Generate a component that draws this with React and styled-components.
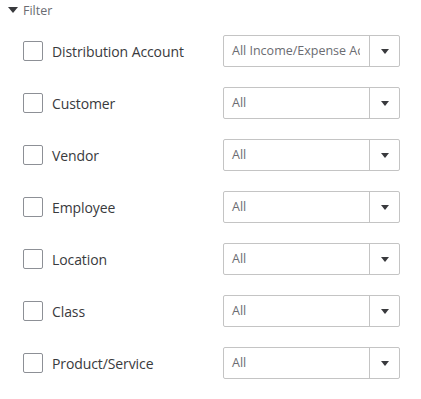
import React from "react";
import styled, { createGlobalStyle } from "styled-components";

const GlobalStyle = createGlobalStyle`
  body {
    margin: 0;
    background: #ffffff;
    font-family: "Open Sans", "Lato", sans-serif;
  }
`;

const filters = [
  { label: "Distribution Account", value: "All Income/Expense Accounts" },
  { label: "Customer", value: "All" },
  { label: "Vendor", value: "All" },
  { label: "Employee", value: "All" },
  { label: "Location", value: "All" },
  { label: "Class", value: "All" },
  { label: "Product/Service", value: "All" },
];

const Panel = styled.div`
  width: 421px;
  padding-top: 2px;
`;

const Header = styled.div`
  display: flex;
  align-items: center;
  gap: 5px;
  height: 16px;
  padding-left: 8px;
  color: #6b6c72;
  font-size: 12.5px;
`;

const Caret = styled.span`
  width: 0;
  height: 0;
  border-left: 5px solid transparent;
  border-right: 5px solid transparent;
  border-top: 6px solid #393a3d;
`;

const List = styled.div`
  display: flex;
  flex-direction: column;
  gap: 20px;
  padding: 17px 0 0 23px;
`;

const Row = styled.div`
  display: flex;
  align-items: center;
  height: 32px;
`;

const Box = styled.span`
  box-sizing: border-box;
  width: 20px;
  height: 20px;
  border: 1px solid #8d9096;
  border-radius: 2px;
  flex: none;
`;

const Label = styled.span`
  width: 171px;
  padding-left: 9px;
  color: #393a3d;
  font-size: 14px;
  font-weight: 500;
  letter-spacing: -0.1px;
`;

const Select = styled.div`
  box-sizing: border-box;
  display: flex;
  width: 177px;
  height: 32px;
  border: 1px solid #c4c4c4;
  border-radius: 2px;
`;

const Value = styled.span`
  flex: 1;
  overflow: hidden;
  white-space: nowrap;
  margin-right: 9px;
  padding-left: 8px;
  line-height: 30px;
  color: #6b6c72;
  font-size: 12.5px;
`;

const Arrow = styled.span`
  display: flex;
  align-items: center;
  justify-content: center;
  width: 29px;
  flex: none;
  border-left: 1px solid #c4c4c4;

  &::after {
    content: "";
    border-left: 4px solid transparent;
    border-right: 4px solid transparent;
    border-top: 5px solid #393a3d;
  }
`;

export default function App() {
  return (
    <>
      <GlobalStyle />
      <Panel>
        <Header>
          <Caret />
          Filter
        </Header>
        <List>
          {filters.map((f) => (
            <Row key={f.label}>
              <Box />
              <Label>{f.label}</Label>
              <Select>
                <Value>{f.value}</Value>
                <Arrow />
              </Select>
            </Row>
          ))}
        </List>
      </Panel>
    </>
  );
}
